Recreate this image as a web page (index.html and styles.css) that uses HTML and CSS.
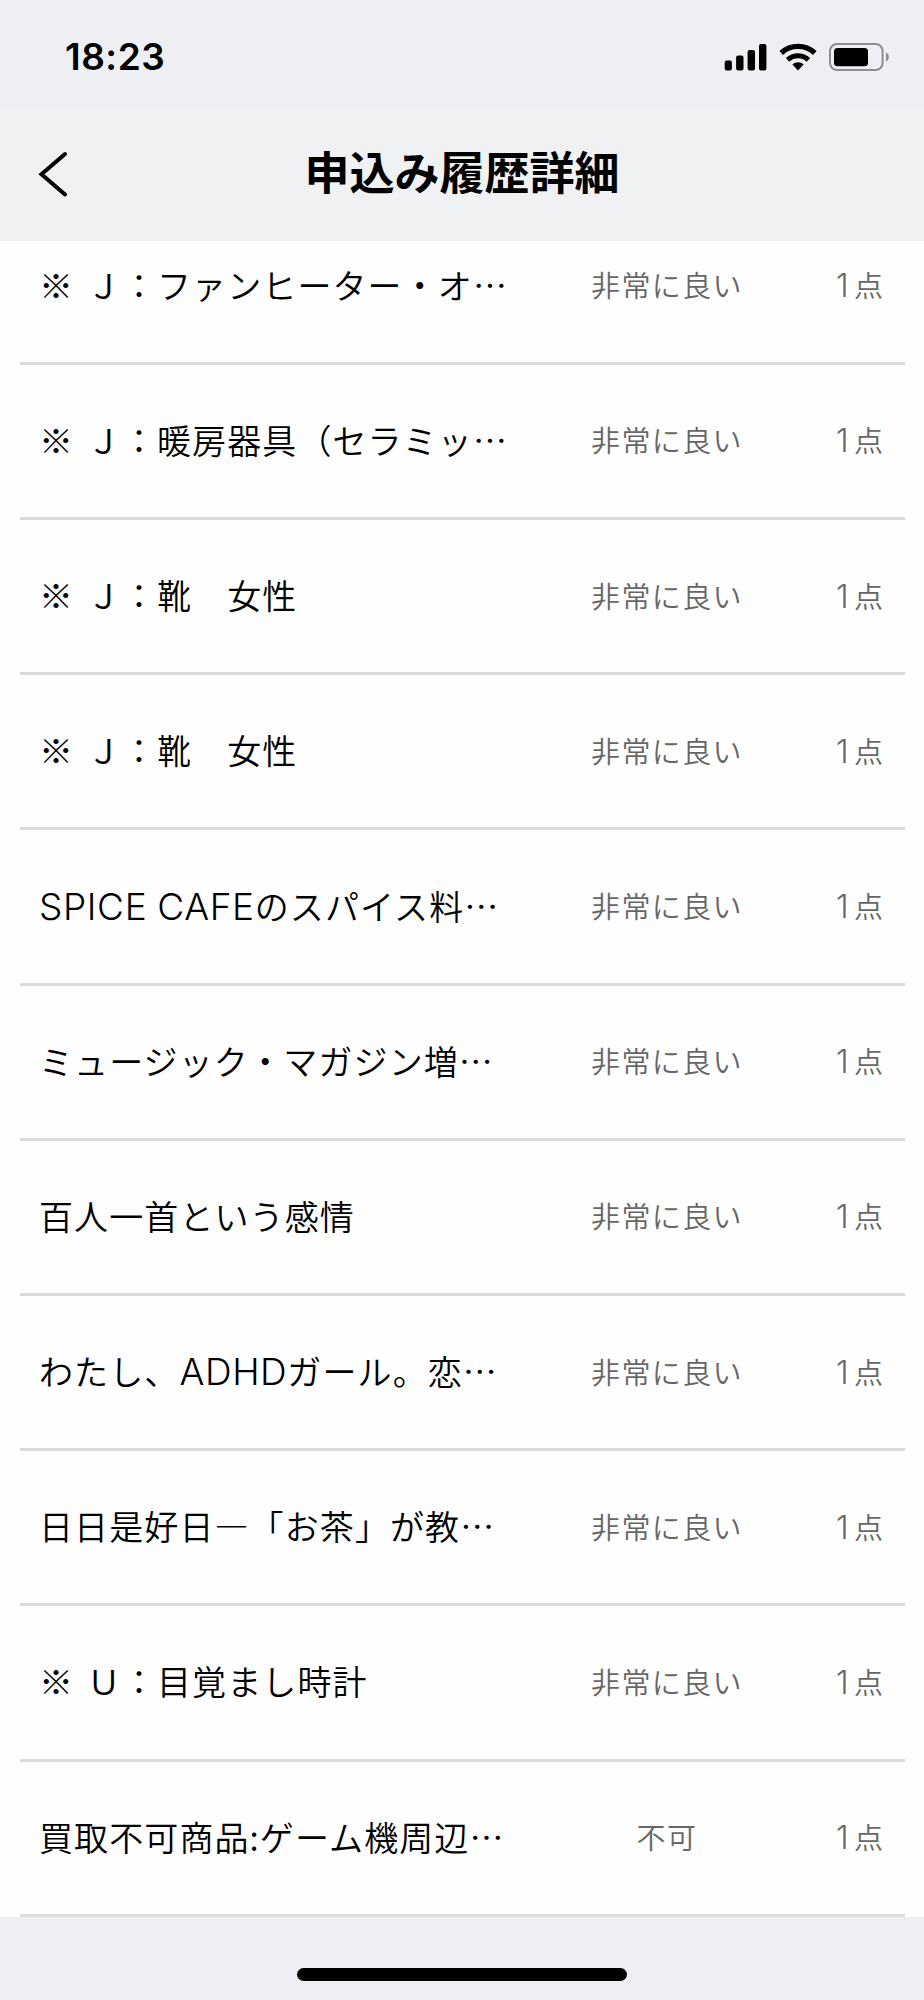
FILE: index.html
```html
<!DOCTYPE html>
<html lang="ja">
<head>
    <meta charset="UTF-8">
    <meta name="viewport" content="width=device-width, initial-scale=1.0">
    <title>申込み履歴詳細</title>
    <link rel="stylesheet" href="styles.css">
</head>
<body>
    <div class="status-bar">
        <span class="time">18:23</span>
        <div class="status-icons">
            <svg class="signal" width="43" height="28" viewBox="0 0 43 28">
                <rect x="0.7" y="17.5" width="7.2" height="10" rx="2"/>
                <rect x="12.1" y="12.5" width="7.4" height="15" rx="2"/>
                <rect x="23.6" y="7" width="7.4" height="20.5" rx="2"/>
                <rect x="35" y="1" width="7.4" height="26.5" rx="2"/>
            </svg>
            <svg class="wifi" width="38" height="28" viewBox="0 0 38 28">
                <path d="M2.2 10 C11.6 1.2 26.4 1.2 35.8 10" fill="none" stroke="#000" stroke-width="5.2"/>
                <path d="M8.6 16.8 C14.4 11.4 23.6 11.4 29.4 16.8" fill="none" stroke="#000" stroke-width="5"/>
                <path d="M13.4 21.6 C16.6 18.6 21.4 18.6 24.6 21.6 L19 27.4 Z"/>
            </svg>
            <svg class="battery" width="62" height="28" viewBox="0 0 62 28">
                <rect x="1" y="1" width="52.6" height="26" rx="7" fill="none" stroke="#8e8e92" stroke-width="2"/>
                <rect x="5" y="5" width="34" height="18.3" rx="3.5"/>
                <path d="M57 9.5 C60.8 11 60.8 17 57 18.5 Z" fill="#8e8e92"/>
            </svg>
        </div>
    </div>

    <header>
        <svg class="back" width="30" height="46" viewBox="0 0 30 46">
            <path d="M27 3 L3.5 23.2 L27 43.4" fill="none" stroke="#000" stroke-width="4" stroke-linecap="round"/>
        </svg>
        <h1>申込み履歴詳細</h1>
    </header>

    <main>
        <ul class="item-list">
            <li><span class="name">※ Ｊ：ファンヒーター・オ…</span><span class="state">非常に良い</span><span class="count"><span class="num">1</span>点</span></li>
            <li><span class="name">※ Ｊ：暖房器具（セラミッ…</span><span class="state">非常に良い</span><span class="count"><span class="num">1</span>点</span></li>
            <li><span class="name">※ Ｊ：靴　女性</span><span class="state">非常に良い</span><span class="count"><span class="num">1</span>点</span></li>
            <li><span class="name">※ Ｊ：靴　女性</span><span class="state">非常に良い</span><span class="count"><span class="num">1</span>点</span></li>
            <li><span class="name"><span class="latin">SPICE CAFE</span>のスパイス料…</span><span class="state">非常に良い</span><span class="count"><span class="num">1</span>点</span></li>
            <li><span class="name">ミュージック・マガジン増…</span><span class="state">非常に良い</span><span class="count"><span class="num">1</span>点</span></li>
            <li><span class="name">百人一首という感情</span><span class="state">非常に良い</span><span class="count"><span class="num">1</span>点</span></li>
            <li><span class="name">わたし、<span class="latin">ADHD</span>ガール。恋…</span><span class="state">非常に良い</span><span class="count"><span class="num">1</span>点</span></li>
            <li><span class="name">日日是好日―「お茶」が教…</span><span class="state">非常に良い</span><span class="count"><span class="num">1</span>点</span></li>
            <li><span class="name">※ Ｕ：目覚まし時計</span><span class="state">非常に良い</span><span class="count"><span class="num">1</span>点</span></li>
            <li><span class="name">買取不可商品:ゲーム機周辺…</span><span class="state">不可</span><span class="count"><span class="num">1</span>点</span></li>
        </ul>
    </main>

    <footer>
        <div class="home-indicator"></div>
    </footer>
</body>
</html>
```

FILE: styles.css
```css
* {
    margin: 0;
    padding: 0;
    box-sizing: border-box;
}

body {
    font-family: "Noto Sans CJK JP", sans-serif;
    background: #fefefe;
    color: #000;
    width: 924px;
    height: 2000px;
    display: flex;
    flex-direction: column;
    overflow: hidden;
}

.status-bar {
    height: 107px;
    padding: 0 33px 6px 65px;
    background: #eeeff3;
    display: flex;
    justify-content: space-between;
    align-items: center;
}

.status-bar .time {
    font-family: Inter, sans-serif;
    font-size: 37px;
    font-weight: 600;
    letter-spacing: 0.5px;
    padding-top: 12px;
}

.status-icons {
    display: flex;
    gap: 12px;
    padding-top: 12px;
}

header {
    height: 134px;
    background: #f0f1f3;
    display: grid;
    grid-template-columns: 100px 1fr 100px;
    align-items: center;
}

header .back {
    margin-left: 38px;
}

header h1 {
    font-size: 45px;
    font-weight: 700;
    line-height: 60px;
    text-align: center;
    white-space: nowrap;
    padding-bottom: 6px;
}

main {
    flex: 1;
    overflow: hidden;
}

/* the list is scrolled a little under the header */
.item-list {
    list-style: none;
    margin: -31.3px 19.5px 0 20px;
}

.item-list li {
    height: 155.2px;
    padding: 0 20px 3px;
    border-bottom: 3px solid #dadada;
    display: grid;
    grid-template-columns: 502px 250px 1fr;
    align-items: center;
    white-space: nowrap;
}

.name {
    font-size: 34px;
    font-weight: 350;
    letter-spacing: 1.1px;
    word-spacing: 4px;
    margin-left: -1px;
}

.latin {
    font-family: Inter, "Noto Sans CJK JP", sans-serif;
    font-size: 37px;
    font-weight: 300;
    letter-spacing: 0.6px;
    word-spacing: -1px;
}

.state,
.count {
    font-size: 29px;
    font-weight: 350;
    letter-spacing: 1.4px;
    color: #666;
}

.state {
    text-align: center;
}

.count {
    text-align: right;
}

.count .num {
    font-family: Inter, sans-serif;
    font-size: 32px;
    font-weight: 300;
    margin-right: 4px;
}

footer {
    height: 83px;
    background: #eeeff3;
    display: flex;
    justify-content: center;
    align-items: flex-start;
    padding-top: 51px;
}

.home-indicator {
    width: 330px;
    height: 13px;
    border-radius: 7px;
    background: #000;
}
```
